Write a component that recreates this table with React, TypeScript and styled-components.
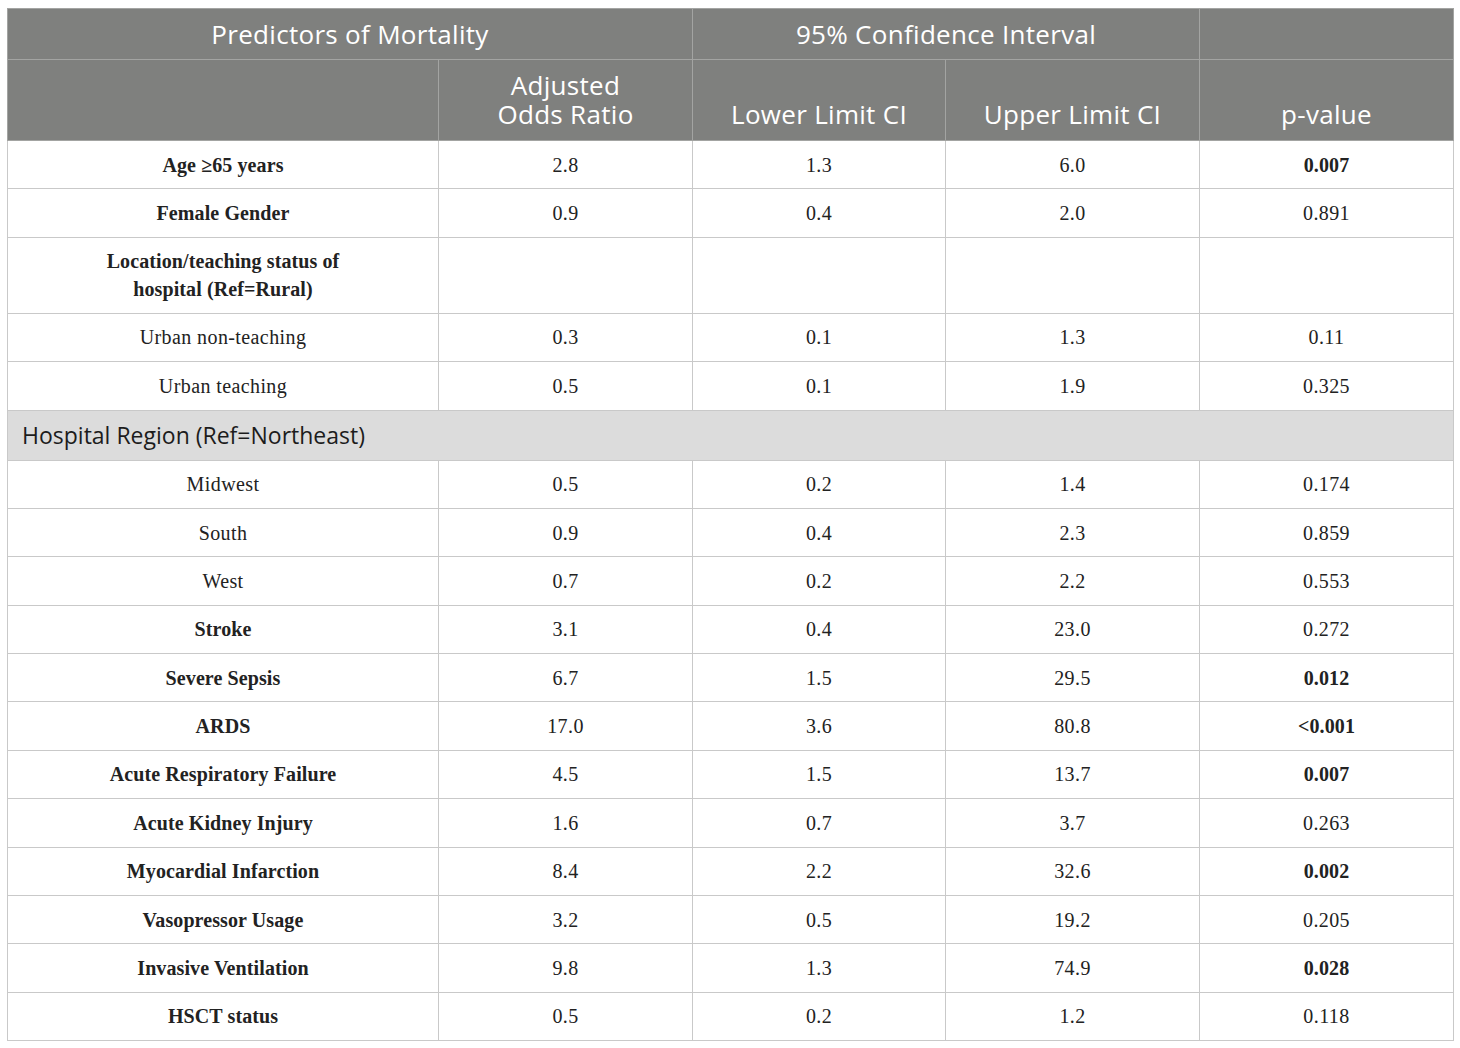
import React from 'react';
import styled, { createGlobalStyle } from 'styled-components';

const GlobalStyle = createGlobalStyle`
  html, body {
    margin: 0;
    padding: 0;
    background: #ffffff;
  }
`;

const Page = styled.div`
  padding: 8px 7px;
`;

const Table = styled.table`
  width: 1446px;
  border-collapse: collapse;
  table-layout: fixed;
  border: 1px solid #c9c9c9;
`;

const HeadCell = styled.th`
  background: #7f807e;
  color: #ffffff;
  font-family: 'Open Sans', Lato, sans-serif;
  font-weight: 400;
  font-size: 26px;
  line-height: 29px;
  letter-spacing: 0.3px;
  text-align: center;
  padding: 0 8px;
  border: 1px solid #a3a4a2;
`;

const TopHeadCell = styled(HeadCell)`
  height: 50px;
  vertical-align: middle;
`;

const SubHeadCell = styled(HeadCell)`
  height: 69px;
  padding-bottom: 11px;
  vertical-align: bottom;
`;

const HeadLine = styled.span`
  display: block;
`;

const Cell = styled.td<{ $bold?: boolean; $tall?: boolean }>`
  height: ${(p) => (p.$tall ? '75px' : '47.375px')};
  padding: 0 10px;
  border: 1px solid #c9c9c9;
  font-family: 'Liberation Serif', 'Times New Roman', serif;
  font-size: 20px;
  line-height: 28px;
  font-weight: ${(p) => (p.$bold ? 700 : 400)};
  letter-spacing: ${(p) => (p.$bold ? '0.1px' : '0.4px')};
  color: #222222;
  text-align: center;
  vertical-align: middle;
`;

const GroupCell = styled.td`
  height: 49px;
  padding: 0 0 0 14px;
  background: #dcdcdc;
  border: 1px solid #c9c9c9;
  font-family: 'Open Sans', Lato, sans-serif;
  font-size: 23px;
  color: #1c1c1c;
  text-align: left;
  vertical-align: middle;
`;

type RowType = {
  label: string
  labelBold?: boolean
  values: string[]
  pBold?: boolean
  tall?: boolean
}

type GroupType = { group: string }

const rows: (RowType | GroupType)[] = [
  { label: 'Age ≥65 years', labelBold: true, values: ['2.8', '1.3', '6.0', '0.007'], pBold: true },
  { label: 'Female Gender', labelBold: true, values: ['0.9', '0.4', '2.0', '0.891'] },
  { label: 'Location/teaching status of hospital (Ref=Rural)', labelBold: true, values: ['', '', '', ''], tall: true },
  { label: 'Urban non-teaching', values: ['0.3', '0.1', '1.3', '0.11'] },
  { label: 'Urban teaching', values: ['0.5', '0.1', '1.9', '0.325'] },
  { group: 'Hospital Region (Ref=Northeast)' },
  { label: 'Midwest', values: ['0.5', '0.2', '1.4', '0.174'] },
  { label: 'South', values: ['0.9', '0.4', '2.3', '0.859'] },
  { label: 'West', values: ['0.7', '0.2', '2.2', '0.553'] },
  { label: 'Stroke', labelBold: true, values: ['3.1', '0.4', '23.0', '0.272'] },
  { label: 'Severe Sepsis', labelBold: true, values: ['6.7', '1.5', '29.5', '0.012'], pBold: true },
  { label: 'ARDS', labelBold: true, values: ['17.0', '3.6', '80.8', '<0.001'], pBold: true },
  { label: 'Acute Respiratory Failure', labelBold: true, values: ['4.5', '1.5', '13.7', '0.007'], pBold: true },
  { label: 'Acute Kidney Injury', labelBold: true, values: ['1.6', '0.7', '3.7', '0.263'] },
  { label: 'Myocardial Infarction', labelBold: true, values: ['8.4', '2.2', '32.6', '0.002'], pBold: true },
  { label: 'Vasopressor Usage', labelBold: true, values: ['3.2', '0.5', '19.2', '0.205'] },
  { label: 'Invasive Ventilation', labelBold: true, values: ['9.8', '1.3', '74.9', '0.028'], pBold: true },
  { label: 'HSCT status', labelBold: true, values: ['0.5', '0.2', '1.2', '0.118'] },
];

const LabelText = styled.span`
  display: inline-block;
  max-width: 280px;
`;

const App: React.FC = () => {
  return (
    <Page>
      <GlobalStyle />
      <Table>
        <colgroup>
          <col style={{ width: 431 }} />
          <col style={{ width: 254 }} />
          <col style={{ width: 253 }} />
          <col style={{ width: 254 }} />
          <col style={{ width: 254 }} />
        </colgroup>
        <thead>
          <tr>
            <TopHeadCell colSpan={2}>Predictors of Mortality</TopHeadCell>
            <TopHeadCell colSpan={2}>95% Confidence Interval</TopHeadCell>
            <TopHeadCell />
          </tr>
          <tr>
            <SubHeadCell />
            <SubHeadCell>
              <HeadLine>Adjusted</HeadLine>
              <HeadLine>Odds Ratio</HeadLine>
            </SubHeadCell>
            <SubHeadCell>Lower Limit CI</SubHeadCell>
            <SubHeadCell>Upper Limit CI</SubHeadCell>
            <SubHeadCell>p-value</SubHeadCell>
          </tr>
        </thead>
        <tbody>
          {rows.map((r, i) => {
            if ('group' in r) {
              return (
                <tr key={i}>
                  <GroupCell colSpan={5}>{r.group}</GroupCell>
                </tr>
              )
            }
            return (
              <tr key={i}>
                <Cell $bold={r.labelBold} $tall={r.tall}>
                  <LabelText>{r.label}</LabelText>
                </Cell>
                {r.values.map((v, j) => (
                  <Cell key={j} $bold={j === 3 && r.pBold} $tall={r.tall}>{v}</Cell>
                ))}
              </tr>
            )
          })}
        </tbody>
      </Table>
    </Page>
  )
};

export default App;
